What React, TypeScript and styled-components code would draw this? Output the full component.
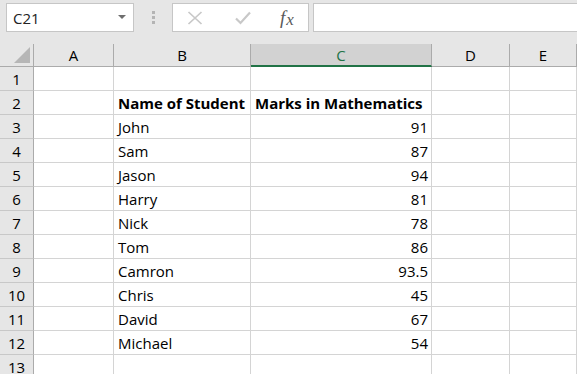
import React from 'react'
import styled, { createGlobalStyle } from 'styled-components'

const GlobalStyle = createGlobalStyle`
  html, body {
    margin: 0;
    padding: 0;
    background: #ffffff;
    overflow: hidden;
  }
  body {
    font-family: 'Open Sans', 'Lato', sans-serif;
  }
`

const COLUMNS = ['A', 'B', 'C', 'D', 'E']
const SELECTED_COL = 'C'

const students = [
  { name: 'John', mark: '91' },
  { name: 'Sam', mark: '87' },
  { name: 'Jason', mark: '94' },
  { name: 'Harry', mark: '81' },
  { name: 'Nick', mark: '78' },
  { name: 'Tom', mark: '86' },
  { name: 'Camron', mark: '93.5' },
  { name: 'Chris', mark: '45' },
  { name: 'David', mark: '67' },
  { name: 'Michael', mark: '54' },
]

const rows: { b?: string; c?: string; bold?: boolean }[] = [
  {},
  { b: 'Name of Student', c: 'Marks in Mathematics', bold: true },
  ...students.map((s) => ({ b: s.name, c: s.mark })),
  {},
]

const App: React.FC = () => {
  return (
    <>
      <GlobalStyle />
      <Window>
        <FormulaBar>
          <NameBox>
            <NameText>C21</NameText>
            <DropArrow />
          </NameBox>
          <Grip>
            <Dot />
            <Dot />
            <Dot />
          </Grip>
          <FxButtons>
            <FxButton>
              <svg width="16" height="14" viewBox="0 0 16 14">
                <path d="M1.5 1 L14.5 13 M14.5 1 L1.5 13" stroke="#c8c8c8" strokeWidth="1.7" fill="none" />
              </svg>
            </FxButton>
            <FxButton>
              <svg width="16" height="14" viewBox="0 0 16 14">
                <path d="M1 7.5 L5.5 12 L15 1.5" stroke="#c8c8c8" strokeWidth="2.2" fill="none" />
              </svg>
            </FxButton>
            <FxButton>
              <FxLabel>
                f<span>x</span>
              </FxLabel>
            </FxButton>
          </FxButtons>
          <FormulaInput />
        </FormulaBar>

        <Sheet>
          <Corner>
            <CornerTriangle />
          </Corner>
          {COLUMNS.map((col) => (
            <ColHead key={col} selected={col === SELECTED_COL}>
              {col}
            </ColHead>
          ))}
          {rows.map((row, i) => (
            <React.Fragment key={i}>
              <RowHead>{i + 1}</RowHead>
              <Cell />
              <Cell bold={row.bold}>{row.b}</Cell>
              <Cell bold={row.bold} numeric={!row.bold}>
                {row.c}
              </Cell>
              <Cell />
              <Cell />
            </React.Fragment>
          ))}
        </Sheet>
      </Window>
    </>
  )
}

const Window = styled.div`
  width: 577px;
  height: 374px;
  overflow: hidden;
  background: #ffffff;
`

const FormulaBar = styled.div`
  height: 44px;
  background: #e6e6e6;
  display: flex;
  align-items: flex-start;
  padding-top: 3px;
  box-sizing: border-box;
`

const NameBox = styled.div`
  margin-left: 6px;
  width: 128px;
  height: 29px;
  box-sizing: border-box;
  background: #ffffff;
  border: 1px solid #c6c6c6;
  display: flex;
  align-items: center;
  justify-content: space-between;
  padding: 0 7px 0 6px;
`

const NameText = styled.span`
  font-size: 15px;
  color: #222222;
  padding-top: 1px;
`

const DropArrow = styled.span`
  width: 0;
  height: 0;
  border-left: 4px solid transparent;
  border-right: 4px solid transparent;
  border-top: 4px solid #6e6e6e;
  margin-top: -1px;
`

const Grip = styled.div`
  width: 38px;
  height: 29px;
  display: flex;
  flex-direction: column;
  align-items: center;
  justify-content: center;
  gap: 2px;
`

const Dot = styled.span`
  width: 3px;
  height: 3px;
  background: #b4b4b4;
`

const FxButtons = styled.div`
  width: 137px;
  height: 29px;
  box-sizing: border-box;
  background: #ffffff;
  border: 1px solid #c6c6c6;
  display: grid;
  grid-template-columns: 38px 58px 30px;
  align-items: center;
  padding-left: 3px;
`

const FxButton = styled.div`
  display: flex;
  align-items: center;
  justify-content: center;
`

const FxLabel = styled.span`
  font-family: 'Liberation Serif', serif;
  font-style: italic;
  font-size: 19px;
  color: #5a5a5a;
  span {
    font-size: 17px;
    position: relative;
    top: 1px;
    margin-left: 1px;
  }
`

const FormulaInput = styled.div`
  flex: 1;
  margin-left: 4px;
  height: 29px;
  box-sizing: border-box;
  background: #ffffff;
  border: 1px solid #c6c6c6;
  border-right: none;
`

const Sheet = styled.div`
  display: grid;
  grid-template-columns: 34px 80px 137px 181px 78px 1fr;
  grid-template-rows: 23px;
  grid-auto-rows: 24px;
  font-size: 15px;
  color: #000000;
`

const Corner = styled.div`
  background: #e6e6e6;
  border-right: 1px solid #ababab;
  border-bottom: 1px solid #ababab;
  box-sizing: border-box;
  position: relative;
`

const CornerTriangle = styled.span`
  position: absolute;
  right: 3px;
  bottom: 3px;
  width: 0;
  height: 0;
  border-left: 16px solid transparent;
  border-bottom: 16px solid #b6b6b6;
`

const ColHead = styled.div<{ selected?: boolean }>`
  background: ${(p) => (p.selected ? '#d2d2d2' : '#e6e6e6')};
  color: ${(p) => (p.selected ? '#217346' : '#000000')};
  border-right: 1px solid #ababab;
  border-bottom: ${(p) => (p.selected ? '2px solid #217346' : '1px solid #ababab')};
  box-sizing: border-box;
  display: flex;
  align-items: center;
  justify-content: center;
  padding-top: ${(p) => (p.selected ? '1px' : '0')};
`

const RowHead = styled.div`
  background: #e6e6e6;
  border-right: 1px solid #ababab;
  border-bottom: 1px solid #c8c8c8;
  box-sizing: border-box;
  display: flex;
  align-items: center;
  justify-content: center;
`

const Cell = styled.div<{ bold?: boolean; numeric?: boolean }>`
  border-right: 1px solid #d4d4d4;
  border-bottom: 1px solid #d4d4d4;
  box-sizing: border-box;
  display: flex;
  align-items: center;
  justify-content: ${(p) => (p.numeric ? 'flex-end' : 'flex-start')};
  padding: ${(p) => (p.numeric ? '1px 3px 0 0' : '1px 0 0 4px')};
  font-weight: ${(p) => (p.bold ? 700 : 400)};
  white-space: nowrap;
`

export default App
